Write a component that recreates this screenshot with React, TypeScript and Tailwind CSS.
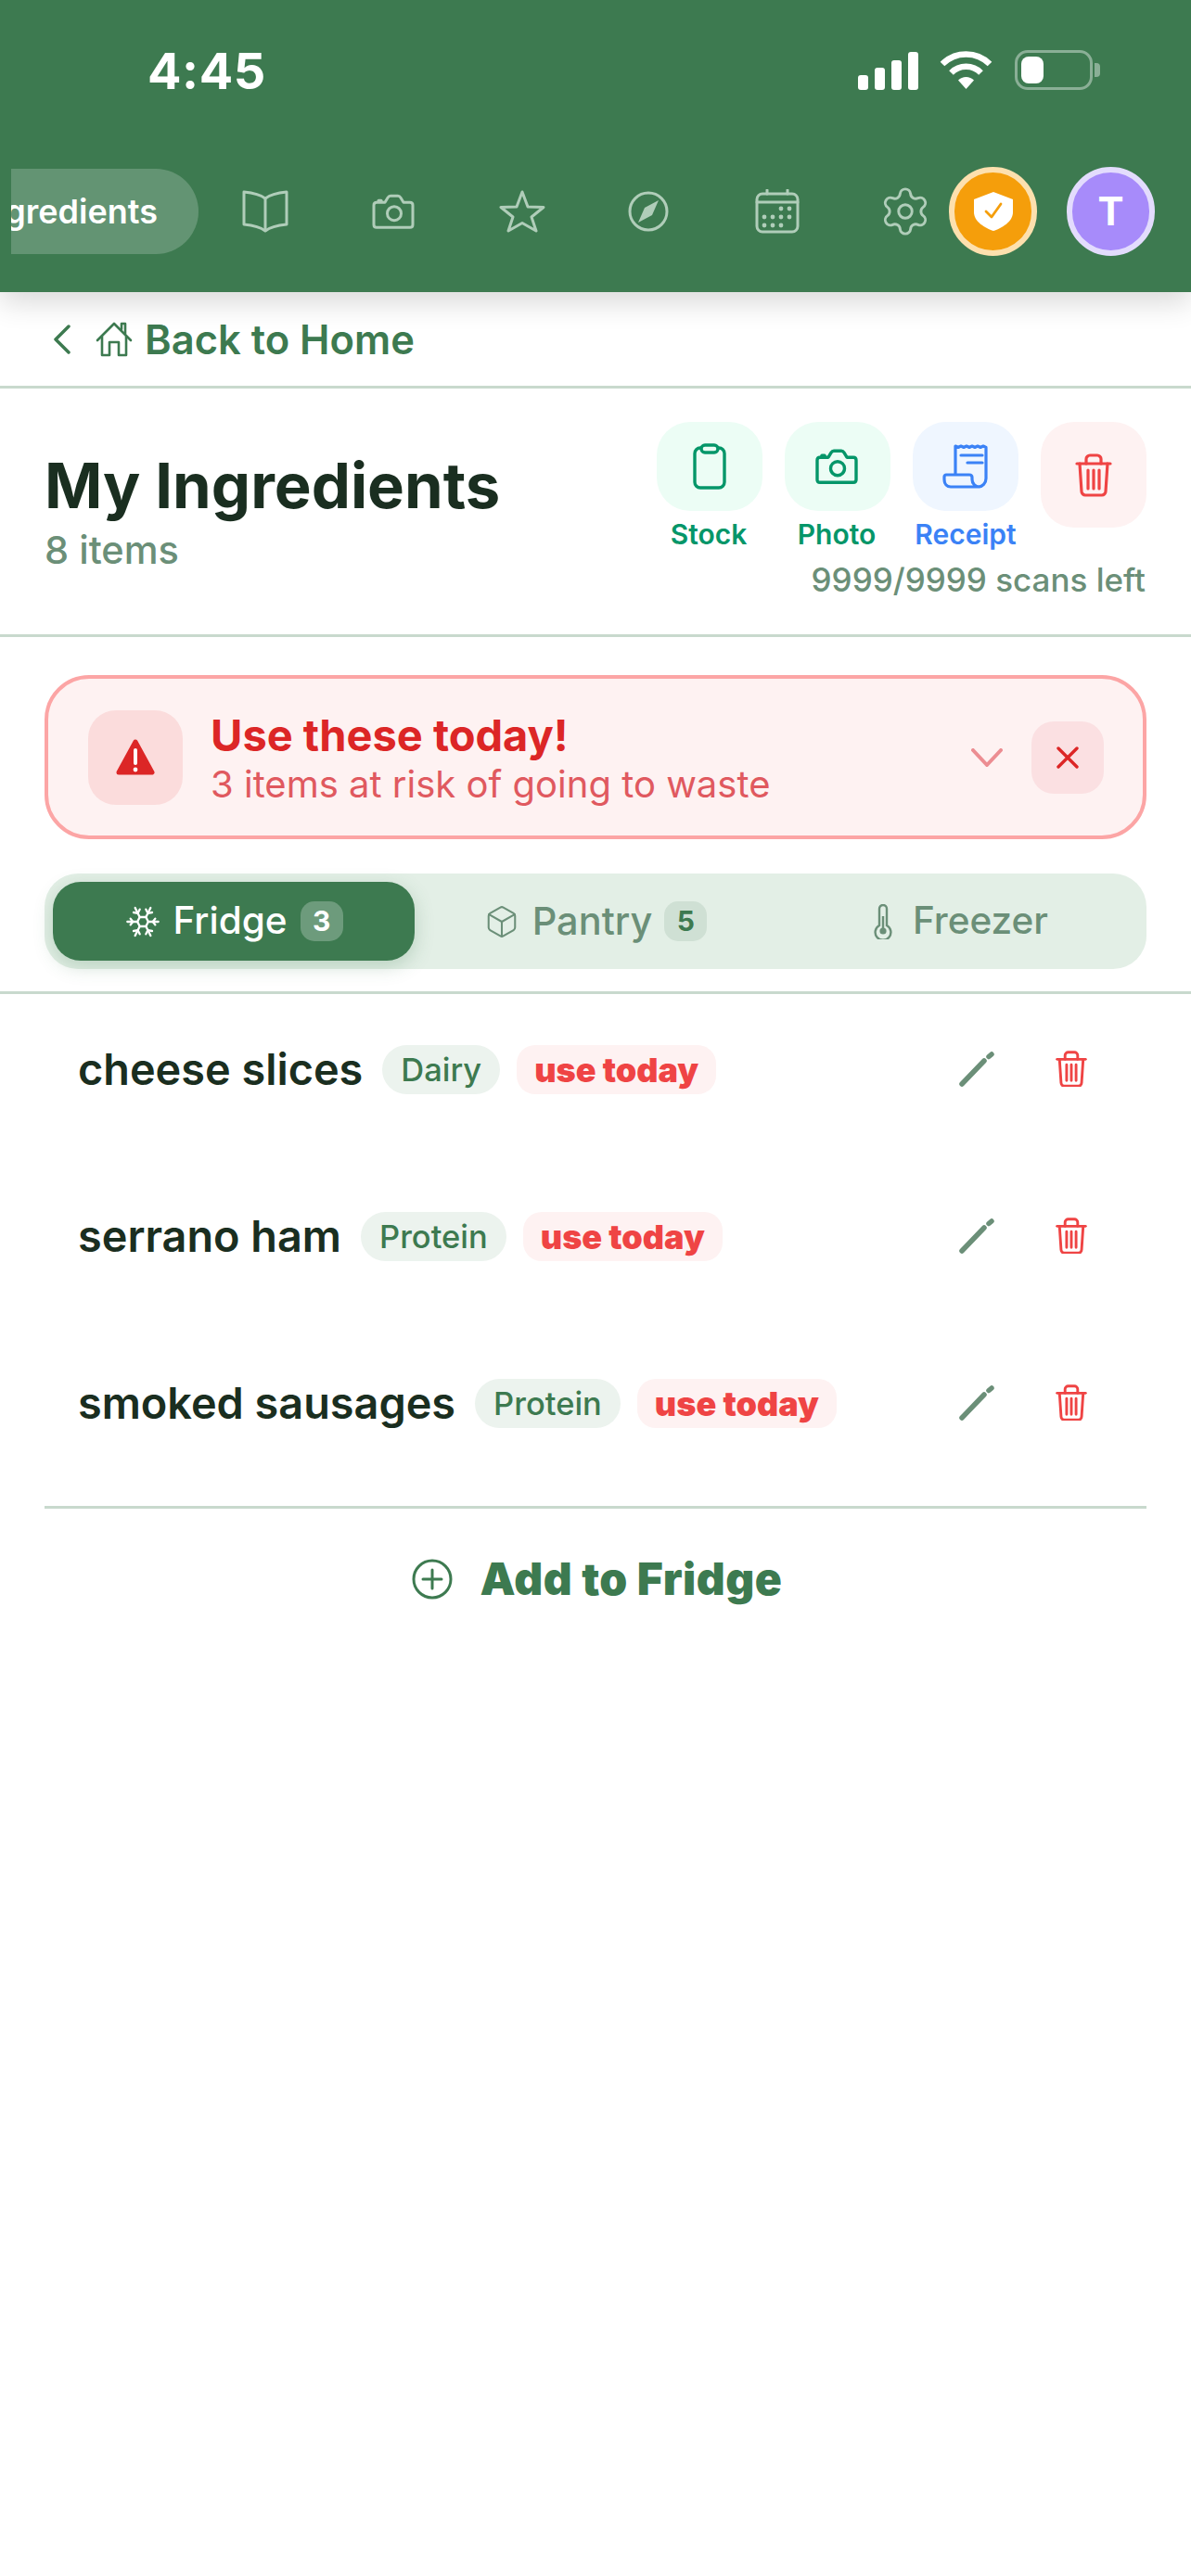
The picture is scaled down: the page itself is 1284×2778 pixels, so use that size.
import React from 'react';
import { Settings, Snowflake, Box } from 'lucide-react';

const Camera = ({ color, w = 48, sw = 3 }: { color: string; w?: number; sw?: number }) => (
  <svg width={w} height={w * 0.8} viewBox="0 0 48 38" fill="none" stroke={color} strokeWidth={sw} strokeLinejoin="round" strokeLinecap="round">
    <path d="M5 9h9l3-5c.6-1 1.6-2 3-2h8c1.4 0 2.4 1 3 2l3 5h7c2 0 3 1 3 3v21c0 2-1 3-3 3H5c-2 0-3-1-3-3V12c0-2 1-3 3-3z" />
    <path d="M7 7h3" />
    <circle cx="24" cy="21" r="7.5" />
  </svg>
);

const Trash = ({ color, w = 40, sw = 3.2 }: { color: string; w?: number; sw?: number }) => (
  <svg width={w} height={(w * 47) / 40} viewBox="0 0 40 47" fill="none" stroke={color} strokeWidth={sw} strokeLinejoin="round" strokeLinecap="round">
    <path d="M2 11H38" />
    <path d="M12 11V6c0-2 2-4 4-4h8c2 0 4 2 4 4v5" />
    <path d="M5 11l2 30c0 2 2 4 4 4h18c2 0 4-2 4-4l2-30" />
    <path d="M14 18v20M20 18v20M26 18v20" />
  </svg>
);

const navIcon = '#b0cdb9';

const items = [
  { name: 'cheese slices', tag: 'Dairy' },
  { name: 'serrano ham', tag: 'Protein' },
  { name: 'smoked sausages', tag: 'Protein' },
];

export default function App() {
  return (
    <div className="min-h-[2778px] bg-white font-['Inter',sans-serif] overflow-hidden">
      {/* header */}
      <header className="relative z-10 bg-[#3d7a50] h-[315px] shadow-[0_10px_30px_rgba(0,0,0,0.16)]">
        <div className="h-[180px] flex items-start justify-between pl-[159px] pr-[98px] pt-[55px]">
          <span className="text-[54px] leading-[44px] font-bold text-white tracking-[0.01em]">4:45</span>
          <div className="flex items-start -mt-[1px]">
            <div className="flex items-end gap-[7px] h-[42px] mt-[1px]">
              <div className="w-[11px] h-[16px] bg-white rounded-[3px]" />
              <div className="w-[11px] h-[24px] bg-white rounded-[3px]" />
              <div className="w-[11px] h-[32px] bg-white rounded-[3px]" />
              <div className="w-[11px] h-[41px] bg-white rounded-[3px]" />
            </div>
            <svg className="ml-[23px]" width="57" height="42" viewBox="0 0 57 42" fill="none" stroke="#fff" strokeWidth="6.5">
              <path d="M3 15A36 36 0 0 1 54 15" />
              <path d="M12.5 24.5A22.5 22.5 0 0 1 44.5 24.5" />
              <path d="M20 32.5L28.5 42L37 32.5A12 12 0 0 0 20 32.5z" fill="#fff" stroke="none" />
            </svg>
            <div className="ml-[24px] w-[84px] h-[43px] rounded-[14px] border-[3.5px] border-white/40 p-[4px]">
              <div className="w-[24px] h-full bg-white rounded-[8px]" />
            </div>
            <div className="ml-[2px] mt-[14px] w-[6px] h-[15px] rounded-r-[4px] bg-white/40" />
          </div>
        </div>

        <nav className="flex items-center h-[96px] pl-[12px]">
          <div className="w-[202px] h-[92px] rounded-r-full bg-white/20 flex items-center justify-end pr-[44px] overflow-hidden shrink-0">
            <span className="text-[36px] font-semibold text-white whitespace-nowrap">Ingredients</span>
          </div>
          <div className="flex items-center gap-[90px] ml-[47px]">
            <svg width="50" height="46" viewBox="0 0 50 46" fill="none" stroke={navIcon} strokeWidth="3" strokeLinejoin="round">
              <path d="M25 9C20 5 12 3 2 2v35c10 1 18 3 23 7c5-4 13-6 23-7V2C38 3 30 5 25 9z" />
              <path d="M25 9V44" />
            </svg>
            <Camera color={navIcon} />
            <svg className="-ml-[1px]" width="50" height="46" viewBox="0 0 50 46" fill="none" stroke={navIcon} strokeWidth="3" strokeLinejoin="round">
              <polygon points="25,2 31,18 48,18.5 35,29 40,44 25,35.5 10,44 15,29 2,18.5 19,18" />
            </svg>
            <svg className="-ml-[1px]" width="44" height="44" viewBox="0 0 44 44" fill="none" stroke={navIcon} strokeWidth="3">
              <circle cx="22" cy="22" r="20" />
              <polygon points="33,10 26,26 11,34 18,18" fill={navIcon} stroke="none" />
            </svg>
            <svg className="ml-[3px]" width="48" height="48" viewBox="0 0 48 48" fill="none" stroke={navIcon} strokeWidth="3" strokeLinecap="round">
              <rect x="2" y="5" width="44" height="41" rx="6" />
              <path d="M2 14H46M13 1v4M35 1v4" />
              <g fill={navIcon} stroke="none">
                <circle cx="28" cy="21" r="2.4" />
                <circle cx="37" cy="21" r="2.4" />
                <circle cx="10" cy="30" r="2.4" />
                <circle cx="19" cy="30" r="2.4" />
                <circle cx="28" cy="30" r="2.4" />
                <circle cx="37" cy="30" r="2.4" />
                <circle cx="10" cy="39" r="2.4" />
                <circle cx="19" cy="39" r="2.4" />
                <circle cx="28" cy="39" r="2.4" />
              </g>
            </svg>
            <Settings size={58} color={navIcon} strokeWidth={1.2} className="-mx-[5px]" />
          </div>
          <div className="ml-[23px] w-[95px] h-[96px] rounded-full bg-[#f59e0b] border-[6px] border-[#fde0ae] flex items-center justify-center shrink-0">
            <svg width="42" height="42" viewBox="0 0 42 42">
              <path d="M21 0L42 8V22C42 32 30 39 21 42C12 39 0 32 0 22V8z" fill="#fff" />
              <path d="M13 21L19 27L29 13" fill="none" stroke="#f59e0b" strokeWidth="2.8" strokeLinecap="round" strokeLinejoin="round" />
            </svg>
          </div>
          <div className="ml-[32px] w-[95px] h-[96px] rounded-full bg-[#a78bfa] border-[6px] border-[#e3dcfd] flex items-center justify-center shrink-0">
            <span className="text-[42px] font-bold text-white leading-none">T</span>
          </div>
        </nav>
      </header>

      {/* back link */}
      <div className="h-[104px] border-b-[3px] border-[#c8d9cd] flex items-center pl-[57px] text-[#3d7a50]">
        <svg width="20" height="32" viewBox="0 0 20 32" fill="none" stroke="#3d7a50" strokeWidth="3.5" strokeLinecap="round" strokeLinejoin="round">
          <path d="M17 2L3 16L17 30" />
        </svg>
        <svg className="ml-[26px]" width="40" height="38" viewBox="0 0 40 38" fill="none" stroke="#3d7a50" strokeWidth="2.6" strokeLinejoin="round" strokeLinecap="round">
          <path d="M2 20L20 2L38 20" />
          <path d="M28 8V2H32V13" />
          <path d="M7 16V36H15V22H25V36H33V16" />
        </svg>
        <span className="ml-[13px] mt-[2px] text-[43.5px] font-semibold">Back to Home</span>
      </div>

      {/* title row */}
      <section className="h-[268px] border-b-[3px] border-[#c8d9cd] px-[48px] flex justify-between">
        <div className="pt-[64px]">
          <h1 className="text-[67px] leading-[82px] font-bold text-[#1a2e20]">My Ingredients</h1>
          <p className="text-[41.5px] leading-[50px] font-medium text-[#6b8f78] mt-[3px]">8 items</p>
        </div>
        <div className="pt-[36px] flex flex-col items-end">
          <div className="flex items-start gap-[24px]">
            <div className="w-[114px] flex flex-col items-center">
              <div className="w-[114px] h-[96px] rounded-[36px] bg-[#ecfdf5] flex items-center justify-center">
                <svg width="36" height="50" viewBox="0 0 36 50" fill="none" stroke="#059669" strokeWidth="3.4" strokeLinejoin="round">
                  <rect x="2" y="5" width="32" height="43" rx="6" />
                  <rect x="9" y="2" width="18" height="8" rx="4" fill="#ecfdf5" />
                </svg>
              </div>
              <span className="text-[30px] leading-[44px] font-semibold text-[#059669] mt-[3px] -ml-[2px]">Stock</span>
            </div>
            <div className="w-[114px] flex flex-col items-center">
              <div className="w-[114px] h-[96px] rounded-[36px] bg-[#ecfdf5] flex items-center justify-center">
                <Camera color="#059669" sw={3.4} />
              </div>
              <span className="text-[30px] leading-[44px] font-semibold text-[#059669] mt-[3px] -ml-[2px]">Photo</span>
            </div>
            <div className="w-[114px] flex flex-col items-center">
              <div className="w-[114px] h-[96px] rounded-[36px] bg-[#eff6ff] flex items-center justify-center">
                <svg width="50" height="48" viewBox="0 0 50 48" fill="none" stroke="#3b82f6" strokeWidth="3.2" strokeLinejoin="round" strokeLinecap="round">
                  <path d="M14 33V2l3 1.5 3-1.5 3 1.5 3-1.5 3 1.5 3-1.5 3 1.5 3-1.5 3 1.5 3-1.5 3 1.5 V37c0 5-4 9-8 9H9c-4 0-7-3-7-8v-3c0-1 1-2 2-2H29c2 0 3 1 3 3v2c0 4 3 8 8 8" />
                  <path d="M20 12H43M27 20H43" />
                </svg>
              </div>
              <span className="text-[30px] leading-[44px] font-semibold text-[#3b82f6] mt-[3px]">Receipt</span>
            </div>
            <div className="w-[114px] h-[114px] rounded-[36px] bg-[#fef2f2] flex items-center justify-center">
              <Trash color="#ef4444" />
            </div>
          </div>
          <span className="text-[35px] leading-[46px] font-medium text-[#6b8f78] mt-[4px] mr-[1px]">9999/9999 scans left</span>
        </div>
      </section>

      {/* waste alert */}
      <div className="mx-[48px] mt-[41px] h-[177px] rounded-[48px] border-[4px] border-[#fca5a5] bg-[#fef2f2] flex items-center pl-[43px] pr-[42px]">
        <div className="w-[102px] h-[102px] rounded-[30px] bg-[#fbdcdc] flex items-center justify-center shrink-0">
          <svg width="42" height="40" viewBox="0 0 42 40">
            <path d="M21 3L39 36H3z" fill="#dc2626" stroke="#dc2626" strokeWidth="5" strokeLinejoin="round" />
            <path d="M21 12V26" stroke="#fff" strokeWidth="4" strokeLinecap="round" />
            <circle cx="21" cy="33" r="2.4" fill="#fff" />
          </svg>
        </div>
        <div className="ml-[30px] flex-1 pt-[4px]">
          <div className="text-[47px] leading-[54px] font-bold text-[#dc2626]">Use these today!</div>
          <div className="text-[40px] leading-[52px] text-[#e0595f]">3 items at risk of going to waste</div>
        </div>
        <svg width="34" height="20" viewBox="0 0 34 20" fill="none" stroke="#ec8d92" strokeWidth="4" strokeLinecap="round" strokeLinejoin="round">
          <path d="M2 2L17 18L32 2" />
        </svg>
        <div className="ml-[31px] w-[78px] h-[78px] rounded-[24px] bg-[#fbe0e2] flex items-center justify-center">
          <svg width="24" height="24" viewBox="0 0 24 24" fill="none" stroke="#dc2626" strokeWidth="3.4" strokeLinecap="round">
            <path d="M2 2L22 22M22 2L2 22" />
          </svg>
        </div>
      </div>

      {/* storage tabs */}
      <div className="mx-[48px] mt-[37px] h-[103px] rounded-[36px] bg-[#e3efe6] p-[9px] grid grid-cols-3">
        <div className="rounded-[30px] bg-[#3d7a50] shadow-[0_6px_20px_rgba(61,122,80,0.25)] flex items-center justify-center text-white">
          <Snowflake size={40} strokeWidth={1.4} />
          <span className="ml-[12px] text-[40.5px] font-medium">Fridge</span>
          <span className="ml-[14px] w-[46px] h-[43px] rounded-[15px] bg-white/25 flex items-center justify-center text-[30px] font-bold">3</span>
        </div>
        <div className="flex items-center justify-center text-[#6b8f78]">
          <Box size={38} strokeWidth={1.3} />
          <span className="ml-[14px] text-[41.5px] font-medium">Pantry</span>
          <span className="ml-[13px] w-[46px] h-[43px] rounded-[15px] bg-[#cfe0d4] flex items-center justify-center text-[30px] font-bold text-[#3d7a50]">5</span>
        </div>
        <div className="flex items-center justify-center text-[#6b8f78] pl-[8px]">
          <svg width="20" height="38" viewBox="0 0 20 38" fill="none" stroke="#6b8f78" strokeWidth="2.4">
            <path d="M6 5a4 4 0 018 0v18a8.4 8.4 0 11-8 0z" />
            <circle cx="10" cy="29" r="3.6" fill="#6b8f78" stroke="none" />
            <path d="M10 28V13" />
          </svg>
          <span className="ml-[22px] text-[40.5px] font-medium">Freezer</span>
        </div>
      </div>
      <div className="mt-[24px] h-[3px] bg-[#c8d9cd]" />

      {/* item list */}
      <ul className="mt-[55px] flex flex-col gap-[127px] pl-[84px] pr-[112px]">
        {items.map((item) => (
          <li key={item.name} className="h-[53px] flex items-center">
            <span className="text-[46.8px] font-semibold text-[#1a2e20]">{item.name}</span>
            <span className="ml-[21px] h-[53px] px-[20px] rounded-full bg-[#ecf3ee] flex items-center text-[34.5px] font-medium text-[#3d7a50]">{item.tag}</span>
            <span className="ml-[18px] h-[53px] px-[19px] rounded-[20px] bg-[#fef2f2] flex items-center text-[36px] font-black text-[#ef4444]">use today</span>
            <svg className="ml-auto -mt-[2px]" width="38" height="38" viewBox="0 0 38 38" fill="none" stroke="#6b8f78" strokeLinecap="round">
              <path d="M3 35L27 10" strokeWidth="5.5" />
              <path d="M32 5.5L35 3" strokeWidth="5.5" />
            </svg>
            <div className="ml-[66px] -mt-[2px]">
              <Trash color="#ef4444" w={34} sw={3.4} />
            </div>
          </li>
        ))}
      </ul>

      {/* add row */}
      <div className="mx-[48px] mt-[84px] border-t-[3px] border-[#c8d9cd] pt-[47px] pl-[3px] flex items-center justify-center text-[#3d7a50]">
        <svg width="44" height="44" viewBox="0 0 44 44" fill="none" stroke="#3d7a50" strokeWidth="3" strokeLinecap="round">
          <circle cx="22" cy="22" r="20" />
          <path d="M22 12V32M12 22H32" />
        </svg>
        <span className="ml-[30px] text-[48px] leading-[58px] font-black tracking-[0.01em]">Add to Fridge</span>
      </div>
    </div>
  );
}
